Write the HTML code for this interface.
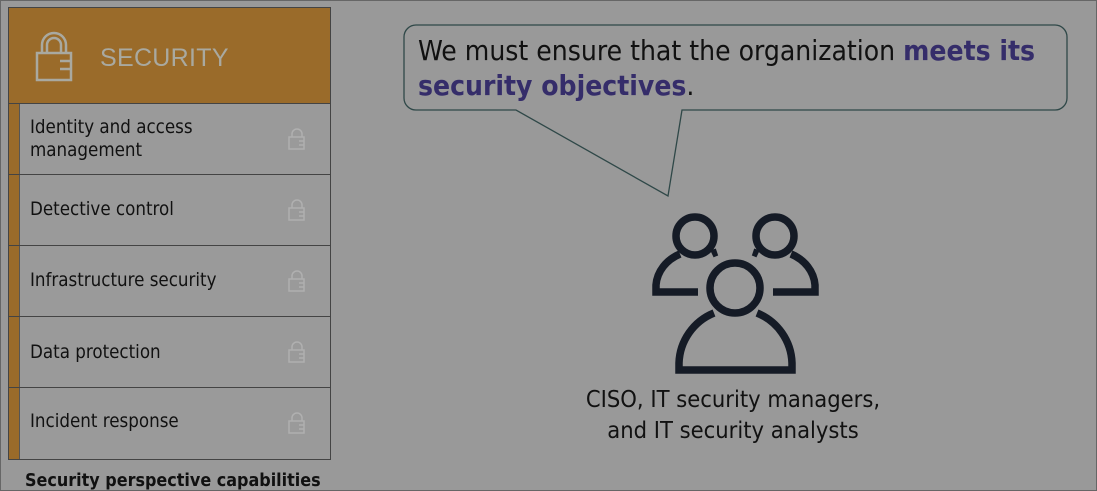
<!DOCTYPE html>
<html><head><style>
body{margin:0;width:1097px;height:491px;background:#999;position:relative;overflow:hidden;font-family:"Liberation Sans","DejaVu Sans",sans-serif;}
.frame{position:absolute;left:0;top:0;width:1095px;height:489px;border:1px solid #666;}
.panel{position:absolute;left:8px;top:7px;width:321px;height:451px;border:1px solid #444;}
.hdr{position:absolute;left:0;top:0;width:321px;height:95px;background:#9a6b2a;border-bottom:1px solid #444;}
.hdr .t{position:absolute;left:91px;top:36px;font-size:25px;color:#a9a9a0;letter-spacing:0.3px;}
.row{position:absolute;left:0;width:321px;border-top:1px solid #444;background:#9a9a9a;}
.row .bar{position:absolute;left:0;top:0;bottom:0;width:10px;background:#9a6b2a;border-right:1px solid #555;}
.row .tx{position:absolute;left:21px;font-size:18.6px;color:#111;line-height:23px;font-family:"DejaVu Sans Condensed","Liberation Sans",sans-serif;}
.row svg{position:absolute;left:279px;}
.cap{position:absolute;left:25px;top:470px;font-size:17.8px;font-weight:bold;color:#111;font-family:"DejaVu Sans Condensed","Liberation Sans",sans-serif;}
.bt{position:absolute;left:418px;top:33px;font-size:28px;line-height:35px;color:#111;font-family:"DejaVu Sans Condensed","Liberation Sans",sans-serif;}
.bt b{color:#352d6a;}
.who{position:absolute;left:483px;top:384px;width:500px;text-align:center;font-size:23.5px;line-height:31px;color:#111;font-family:"DejaVu Sans Condensed","Liberation Sans",sans-serif;}
</style></head><body>
<div class="frame"></div>
<div class="panel">
 <div class="hdr">
  <svg style="position:absolute;left:26px;top:22px" width="44" height="52" viewBox="0 0 44 52" fill="none" stroke="#a9a9a0" stroke-width="2.5"><path d="M7 22V15a12 12 0 0 1 24 0v7"/><path d="M36 23H2v27h34zM25 31h11M25 39h11"/><path d="M12 22v-7a7 7 0 0 1 14 0v7"/></svg>
  <div class="t">SECURITY</div>
 </div>
 <div class="row" style="top:95px;height:70px"><div class="bar"></div><div class="tx" style="top:12px">Identity and access<br>management</div><svg style="top:24px" width="18" height="22" viewBox="0 0 18 22" fill="none" stroke="#b0b0b0" stroke-width="1.5"><path d="M4 9V6a5 5 0 0 1 10 0v3M1 9h15v12H1zM11 13h5M11 17h5"/></svg></div>
 <div class="row" style="top:166px;height:70px"><div class="bar"></div><div class="tx" style="top:23px">Detective control</div><svg style="top:24px" width="18" height="22" viewBox="0 0 18 22" fill="none" stroke="#b0b0b0" stroke-width="1.5"><path d="M4 9V6a5 5 0 0 1 10 0v3M1 9h15v12H1zM11 13h5M11 17h5"/></svg></div>
 <div class="row" style="top:237px;height:70px"><div class="bar"></div><div class="tx" style="top:23px">Infrastructure security</div><svg style="top:24px" width="18" height="22" viewBox="0 0 18 22" fill="none" stroke="#b0b0b0" stroke-width="1.5"><path d="M4 9V6a5 5 0 0 1 10 0v3M1 9h15v12H1zM11 13h5M11 17h5"/></svg></div>
 <div class="row" style="top:308px;height:70px"><div class="bar"></div><div class="tx" style="top:24px">Data protection</div><svg style="top:24px" width="18" height="22" viewBox="0 0 18 22" fill="none" stroke="#b0b0b0" stroke-width="1.5"><path d="M4 9V6a5 5 0 0 1 10 0v3M1 9h15v12H1zM11 13h5M11 17h5"/></svg></div>
 <div class="row" style="top:379px;height:71px"><div class="bar"></div><div class="tx" style="top:22px">Incident response</div><svg style="top:24px" width="18" height="22" viewBox="0 0 18 22" fill="none" stroke="#b0b0b0" stroke-width="1.5"><path d="M4 9V6a5 5 0 0 1 10 0v3M1 9h15v12H1zM11 13h5M11 17h5"/></svg></div>
</div>
<div class="cap">Security perspective capabilities</div>
<svg style="position:absolute;left:0;top:0" width="1097" height="491">
 <path d="M416 25H1055a12 12 0 0 1 12 12V98a12 12 0 0 1-12 12H682L668 196L516 110H416a12 12 0 0 1-12-12V37a12 12 0 0 1 12-12z" fill="none" stroke="#2f4848" stroke-width="1.3"/>
 <g fill="none" stroke="#151b26" stroke-width="7.5">
  <circle cx="695" cy="236" r="19"/>
  <circle cx="775" cy="236" r="19"/>
  <circle cx="735" cy="288" r="25"/>
  <path d="M698 292H656V285a42 37 0 0 1 24-31"/>
  <path d="M712 254a42 37 0 0 1 5-2"/>
  <path d="M773 292H815V285a42 37 0 0 0-24-31"/>
  <path d="M758 254a42 37 0 0 0-5-2"/>
  <path d="M714 313a56 56 0 0 0-35 50V370H792V363a56 56 0 0 0-35-50"/>
 </g>
</svg>
<div class="bt">We must ensure that the organization <b>meets its<br>security objectives</b>.</div>
<div class="who">CISO, IT security managers,<br>and IT security analysts</div>
</body></html>
